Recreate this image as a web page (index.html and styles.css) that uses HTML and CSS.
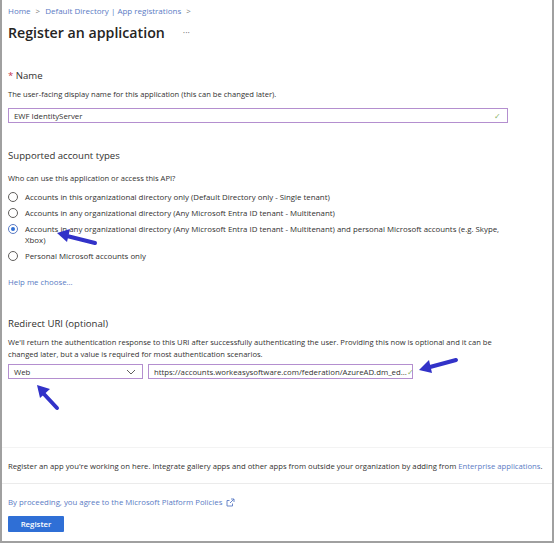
FILE: index.html
```html
<!DOCTYPE html>
<html lang="en">
<head>
  <meta charset="UTF-8">
  <title>Register an application</title>
  <link rel="stylesheet" href="styles.css">
</head>
<body>
  <div class="frame">
    <div class="breadcrumb">
      <a href="#">Home</a><span class="sep">&gt;</span><a href="#">Default Directory | App registrations</a><span class="sep">&gt;</span>
    </div>
    <div class="title-row">
      <h1>Register an application</h1>
      <span class="more">···</span>
    </div>

    <section class="name-section">
      <h2><span class="req">*</span> Name</h2>
      <p class="desc">The user-facing display name for this application (this can be changed later).</p>
      <div class="input name-input">
        <span>EWF IdentityServer</span>
        <span class="check">✓</span>
      </div>
    </section>

    <section class="account-section">
      <h2>Supported account types</h2>
      <p class="desc">Who can use this application or access this API?</p>
      <ul class="radios">
        <li><span class="radio"></span><span class="label">Accounts in this organizational directory only (Default Directory only - Single tenant)</span></li>
        <li><span class="radio"></span><span class="label">Accounts in any organizational directory (Any Microsoft Entra ID tenant - Multitenant)</span></li>
        <li><span class="radio checked"></span><span class="label">Accounts in any organizational directory (Any Microsoft Entra ID tenant - Multitenant) and personal Microsoft accounts (e.g. Skype, Xbox)</span></li>
        <li><span class="radio"></span><span class="label">Personal Microsoft accounts only</span></li>
      </ul>
      <a class="link help" href="#">Help me choose...</a>
    </section>

    <section class="redirect-section">
      <h2>Redirect URI (optional)</h2>
      <p class="desc">We'll return the authentication response to this URI after successfully authenticating the user. Providing this now is optional and it can be changed later, but a value is required for most authentication scenarios.</p>
      <div class="uri-row">
        <div class="input select">
          <span>Web</span>
          <svg class="chev" width="10" height="6" viewBox="0 0 10 6"><path d="M1 1l4 4 4-4" fill="none" stroke="#605e5c" stroke-width="1"/></svg>
        </div>
        <div class="input uri">
          <span>https://accounts.workeasysoftware.com/federation/AzureAD.dm_ed...</span>
          <span class="check">✓</span>
        </div>
      </div>
    </section>

    <div class="footer-note">
      Register an app you're working on here. Integrate gallery apps and other apps from outside your organization by adding from <a class="link" href="#">Enterprise applications</a>.
    </div>

    <div class="actions">
      <a class="link policy" href="#">By proceeding, you agree to the Microsoft Platform Policies
        <svg width="9" height="9" viewBox="0 0 9 9"><path d="M5 1h3v3M8 1L4 5M6.5 5.5V8H1V2.5h2.5" fill="none" stroke="#5a7bc4" stroke-width="0.9"/></svg>
      </a>
      <button class="btn">Register</button>
    </div>

    <svg class="arrow arrow-radio" width="44" height="20" viewBox="0 0 44 20"><path d="M40 15L12 8" stroke="#3232c8" stroke-width="4" stroke-linecap="round"/><path d="M2 5L15 1L12 14Z" fill="#3232c8"/></svg>
    <svg class="arrow arrow-web" width="26" height="28" viewBox="0 0 26 28"><path d="M22 25L8 10" stroke="#3232c8" stroke-width="4" stroke-linecap="round"/><path d="M2 2L15 6L5 15Z" fill="#3232c8"/></svg>
    <svg class="arrow arrow-uri" width="42" height="18" viewBox="0 0 42 18"><path d="M38 3L12 10" stroke="#3232c8" stroke-width="4" stroke-linecap="round"/><path d="M1 13L11 3L14 16Z" fill="#3232c8"/></svg>
  </div>
</body>
</html>
```

FILE: styles.css
```css
body {
  margin: 0;
  font-family: "Open Sans", "Noto Sans", Arial, sans-serif;
  color: #323130;
  background: #fff;
}

.frame {
  position: relative;
  box-sizing: border-box;
  width: 554px;
  height: 543px;
  border-left: 2px solid #a0a0a0;
  border-right: 2px solid #a0a0a0;
  border-bottom: 2px solid #a0a0a0;
  padding: 4px 6px 0;
}

.breadcrumb {
  font-size: 8px;
  line-height: 14px;
  color: #5a7bc4;
}

.breadcrumb a {
  color: #5a7bc4;
  text-decoration: none;
}

.breadcrumb .sep {
  color: #7a7a7a;
  margin: 0 5px;
}

.title-row {
  display: flex;
  align-items: center;
  gap: 18px;
  height: 26px;
  margin-top: 1px;
}

h1 {
  margin: 0;
  font-size: 14.2px;
  font-weight: 600;
  color: #252423;
}

.more {
  font-size: 9px;
  color: #707070;
}

h2 {
  margin: 0;
  font-size: 9.6px;
  font-weight: 400;
  line-height: 14px;
}

.req {
  color: #c4314b;
}

.desc {
  margin: 0;
  font-size: 7.6px;
  line-height: 12px;
}

.name-section {
  margin-top: 24px;
}

.name-section .desc {
  margin-top: 5px;
}

.input {
  box-sizing: border-box;
  display: flex;
  align-items: center;
  justify-content: space-between;
  height: 15px;
  border: 1px solid #b48fcf;
  padding: 0 6px 0 5px;
  font-size: 7.8px;
}

.name-input {
  width: 500px;
  margin-top: 8px;
}

.check {
  color: #8ab56a;
  font-size: 8px;
}

.account-section {
  margin-top: 26px;
}

.account-section .desc {
  margin-top: 9px;
}

.radios {
  list-style: none;
  margin: 5px 0 0;
  padding: 0;
}

.radios li {
  display: flex;
  gap: 7px;
  font-size: 7.85px;
  line-height: 11px;
  padding: 2.5px 0;
}

.radios .label {
  max-width: 490px;
}

.radio {
  flex: none;
  box-sizing: border-box;
  width: 10px;
  height: 10px;
  margin-top: 0.5px;
  border: 1px solid #605e5c;
  border-radius: 50%;
  position: relative;
}

.radio.checked {
  border-color: #5a7bc4;
}

.radio.checked::after {
  content: "";
  position: absolute;
  left: 2px;
  top: 2px;
  width: 4px;
  height: 4px;
  border-radius: 50%;
  background: #2f6fd6;
}

.link {
  color: #5a7bc4;
  text-decoration: none;
}

.help {
  display: block;
  margin-top: 13px;
  font-size: 7.8px;
}

.redirect-section {
  margin-top: 30px;
}

.redirect-section .desc {
  margin-top: 5px;
  width: 490px;
}

.uri-row {
  display: flex;
  gap: 5px;
  margin-top: 4px;
}

.select {
  width: 135px;
}

.uri {
  width: 265px;
}

.footer-note {
  margin-top: 68px;
  padding-top: 12px;
  padding-bottom: 11px;
  border-top: 1px solid #f3f3f3;
  border-bottom: 1px solid #ebebeb;
  font-size: 7.7px;
  line-height: 12px;
  margin-left: -6px;
  margin-right: -6px;
  padding-left: 6px;
}

.actions {
  padding-top: 12px;
}

.policy {
  display: flex;
  align-items: center;
  gap: 4px;
  font-size: 7.8px;
  line-height: 12px;
}

.btn {
  display: block;
  margin-top: 8px;
  width: 56px;
  height: 16px;
  border: none;
  border-radius: 1px;
  background: #2f6fd6;
  color: #fff;
  font-family: inherit;
  font-size: 7.8px;
  font-weight: 600;
  padding: 0;
}

.arrow {
  position: absolute;
}

.arrow-radio {
  left: 53px;
  top: 228px;
}

.arrow-web {
  left: 33px;
  top: 383px;
}

.arrow-uri {
  left: 416px;
  top: 357px;
}
```
